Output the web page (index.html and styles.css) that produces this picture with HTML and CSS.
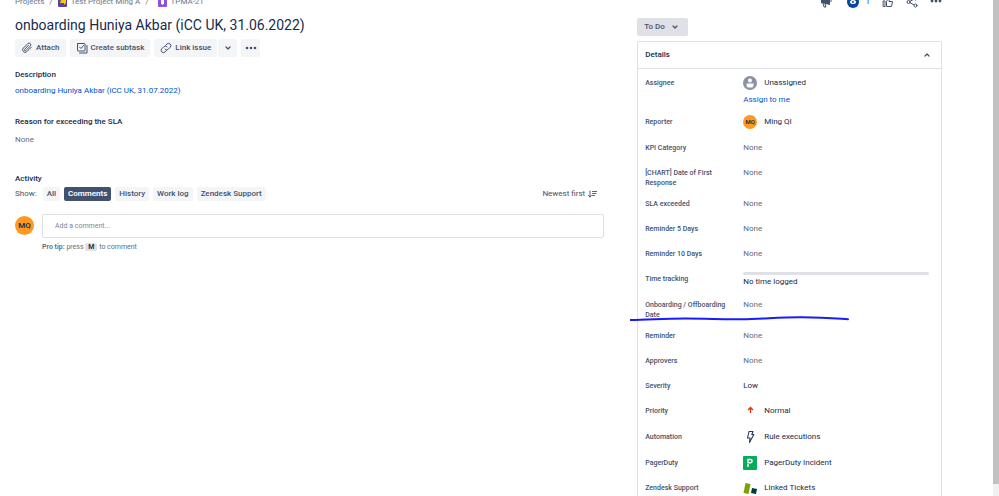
FILE: index.html
```html
<!DOCTYPE html>
<html lang="en">
<head>
  <meta charset="UTF-8" />
  <meta name="viewport" content="width=device-width, initial-scale=1.0"/>
  <title>TPMA-21 - onboarding Huniya Akbar</title>
  <link rel="stylesheet" href="styles.css">
</head>
<body>

  <div class="page">
    <main class="issue">
      <nav class="topbar breadcrumbs" aria-label="Breadcrumbs">
        <a href="#">Projects</a>
        <span class="slash">/</span>
        <a href="#" class="crumb">
          <svg width="9" height="9" viewBox="0 0 9 9"><rect width="9" height="9" rx="1" fill="#5243aa"/><path d="M3 2h5v3L6 7V5H2z" fill="#ffc400"/></svg>
          Test Project Ming A
        </a>
        <span class="slash">/</span>
        <a href="#" class="crumb crumb-key">
          <svg width="9" height="9" viewBox="0 0 9 9"><rect width="9" height="9" rx="1" fill="#904ee2"/><path d="M3 2h3v3.500L4.500 7 3 5.500z" fill="#fff"/></svg>
          TPMA-21
        </a>
      </nav>

      <h1>onboarding Huniya Akbar (iCC UK, 31.06.2022)</h1>

      <div class="actions">
        <button type="button" class="btn">
          <svg width="12" height="12" viewBox="0 0 24 24" class="stroke"><path d="M20.500 10.500l-8.700 8.700a5 5 0 0 1-7.100-7.100l8.900-8.900a3.500 3.500 0 0 1 5 5l-8.800 8.800a1.700 1.700 0 0 1-2.500-2.500l7.700-7.700"/></svg>
          Attach
        </button>
        <button type="button" class="btn">
          <svg width="12" height="12" viewBox="0 0 24 24" class="stroke"><rect x="3" y="3" width="15" height="15" rx="1"/><path d="M7 10l3 3 5-6M22 7v15H7"/></svg>
          Create subtask
        </button>
        <div class="split">
          <button type="button" class="btn">
            <svg width="12" height="12" viewBox="0 0 24 24" class="stroke"><path d="M10 14.500a4.500 4.500 0 0 0 6.500 0l4-4a4.600 4.600 0 0 0-6.500-6.500l-2.500 2.500M14 9.500a4.500 4.500 0 0 0-6.500 0l-4 4a4.600 4.600 0 0 0 6.500 6.500l2.500-2.500"/></svg>
            Link issue
          </button>
          <button type="button" class="btn btn-icon" aria-label="More link options">
            <svg width="6" height="6" viewBox="0 0 6 6" class="chevron"><path d="M1 2l2 2 2-2"/></svg>
          </button>
        </div>
        <button type="button" class="btn btn-icon" aria-label="More actions">
          <svg width="12" height="4" viewBox="0 0 12 4" fill="#42526e"><circle cx="2" cy="2" r="1.300"/><circle cx="6" cy="2" r="1.300"/><circle cx="10" cy="2" r="1.300"/></svg>
        </button>
      </div>

      <section class="field">
        <h2>Description</h2>
        <a href="#">onboarding Huniya Akbar (iCC UK, 31.07.2022)</a>
      </section>

      <section class="field field-reason">
        <h2>Reason for exceeding the SLA</h2>
        <span class="none">None</span>
      </section>

      <section class="activity">
        <h2>Activity</h2>
        <div class="filters">
          <span>Show:</span>
          <button type="button" class="tab">All</button>
          <button type="button" class="tab tab-active">Comments</button>
          <button type="button" class="tab">History</button>
          <button type="button" class="tab">Work log</button>
          <button type="button" class="tab">Zendesk Support</button>
          <button type="button" class="sort">
            Newest first
            <svg width="9" height="8" viewBox="0 0 9 8" class="thin"><path d="M2 1v6M0.500 5.500L2 7l1.500-1.500M4.500 1.500H9M4.500 3.500H8M4.500 5.500H6.500"/></svg>
          </button>
        </div>
        <div class="comment">
          <span class="avatar">MQ</span>
          <div class="comment-box">
            <input type="text" placeholder="Add a comment..." aria-label="Add a comment">
            <p class="tip"><b>Pro tip:</b> press <kbd>M</kbd> to comment</p>
          </div>
        </div>
      </section>
    </main>

    <aside class="sidebar">
      <div class="topbar tools">
        <button type="button" class="tool" aria-label="Give feedback">
          <svg width="12" height="12" viewBox="0 0 12 12"><path d="M1 4l9-3v8L1 7z" fill="#42526e"/><path d="M3 7l1 4h2L5 8M11 4v2" stroke="#42526e" fill="none"/></svg>
        </button>
        <button type="button" class="tool watch" aria-label="Watch options">
          <svg width="12" height="12" viewBox="0 0 12 12"><circle cx="6" cy="6" r="6" fill="#0747a6"/><ellipse cx="6" cy="6" rx="3" ry="2" fill="#fff"/><circle cx="6" cy="6" r="1" fill="#0747a6"/></svg>
          1
        </button>
        <button type="button" class="tool" aria-label="Vote">
          <svg width="12" height="12" viewBox="0 0 24 24" class="stroke"><path d="M3 10h3v11H3zM10 21h9l2-10h-7l1-7h-2l-4 7v9z"/></svg>
        </button>
        <button type="button" class="tool" aria-label="Share">
          <svg width="12" height="12" viewBox="0 0 24 24" class="stroke"><circle cx="5" cy="12" r="3"/><circle cx="19" cy="5" r="3"/><circle cx="19" cy="19" r="3"/><path d="M8 10.500l8-4M8 13.500l8 4"/></svg>
        </button>
        <button type="button" class="tool" aria-label="Actions">
          <svg width="12" height="12" viewBox="0 0 12 12" fill="#42526e"><circle cx="2" cy="5" r="1.400"/><circle cx="6" cy="5" r="1.400"/><circle cx="10" cy="5" r="1.400"/></svg>
        </button>
      </div>

      <button type="button" class="status">
        To Do
        <svg width="6" height="6" viewBox="0 0 6 6" class="chevron"><path d="M1 2l2 2 2-2"/></svg>
      </button>

      <section class="details">
        <button type="button" class="details-header" aria-expanded="true">
          Details
          <svg width="6" height="6" viewBox="0 0 6 6" class="chevron"><path d="M1 4l2-2 2 2"/></svg>
        </button>
        <dl>
          <div class="row">
            <dt>Assignee</dt>
            <dd>
              <div class="person">
                <svg width="14" height="14" viewBox="0 0 14 14"><circle cx="7" cy="7" r="7" fill="#8993a4"/><circle cx="7" cy="4.500" r="2" fill="#fff"/><path d="M3.500 7.500h7v2a2 2 0 0 1-2 2h-3a2 2 0 0 1-2-2z" fill="#fff"/></svg>
                Unassigned
              </div>
              <a href="#" class="assign">Assign to me</a>
            </dd>
          </div>
          <div class="row row-icon">
            <dt>Reporter</dt>
            <dd class="person"><span class="avatar avatar-small">MQ</span>Ming QI</dd>
          </div>
          <div class="row"><dt>KPI Category</dt><dd class="none">None</dd></div>
          <div class="row"><dt>[CHART] Date of First Response</dt><dd class="none">None</dd></div>
          <div class="row"><dt>SLA exceeded</dt><dd class="none">None</dd></div>
          <div class="row"><dt>Reminder 5 Days</dt><dd class="none">None</dd></div>
          <div class="row"><dt>Reminder 10 Days</dt><dd class="none">None</dd></div>
          <div class="row">
            <dt>Time tracking</dt>
            <dd><div class="time-bar"></div>No time logged</dd>
          </div>
          <div class="row row-marked">
            <dt>Onboarding / Offboarding Date</dt>
            <dd class="none">None</dd>
            <svg class="marker" width="219" height="6" viewBox="0 0 219 6"><path d="M0 4C20 4 30 2.500 55 2.500S90 3.500 112 3.200S150 1 172 1.200S200 2 218 3.200"/></svg>
          </div>
          <div class="row"><dt>Reminder</dt><dd class="none">None</dd></div>
          <div class="row"><dt>Approvers</dt><dd class="none">None</dd></div>
          <div class="row"><dt>Severity</dt><dd>Low</dd></div>
          <div class="row row-icon">
            <dt>Priority</dt>
            <dd class="person">
              <svg width="14" height="14" viewBox="0 0 14 14"><path d="M7.500 9V4M5 6l2.500-2.500L10 6" fill="none" stroke="#de350b" stroke-width="1.300"/></svg>
              Normal
            </dd>
          </div>
          <div class="row row-icon">
            <dt>Automation</dt>
            <dd class="person">
              <svg width="14" height="14" viewBox="0 0 14 14"><path d="M6 1.500h4L8.800 4.500h2L6.500 12.500 7 8H4.500z" fill="none" stroke="#253858" stroke-width="1.100" stroke-linejoin="round"/></svg>
              Rule executions
            </dd>
          </div>
          <div class="row">
            <dt>PagerDuty</dt>
            <dd class="person">
              <svg width="14" height="14" viewBox="0 0 14 14"><rect width="14" height="14" rx="1" fill="#06ac58"/><path d="M5 11V8M5 3.500h2.500a1.500 1.500 0 0 1 0 3.200H5z" fill="none" stroke="#fff" stroke-width="1.400"/></svg>
              PagerDuty Incident
            </dd>
          </div>
          <div class="row">
            <dt>Zendesk Support</dt>
            <dd class="person">
              <svg width="14" height="14" viewBox="0 0 14 14"><path d="M2.500 2l5 1L5.500 13l-5-1z" fill="#78a300"/><path d="M9 7l5 1-1 5L8 12z" fill="#03363d"/></svg>
              Linked Tickets
            </dd>
          </div>
        </dl>
      </section>
    </aside>
  </div>
  <div class="scroll-track"><div class="scroll-thumb"></div></div>

</body>
</html>
```

FILE: styles.css
```css
* {
  box-sizing: border-box;
}

body {
  display: flex;
  height: 100vh;
  margin: 0;
  overflow: hidden;
  background: #fff;
  color: #172b4d;
  font-family: Roboto, "Open Sans", sans-serif;
  font-size: 8px;
  line-height: 14px;
}

h1, h2, p, dl, dd {
  margin: 0;
}

h1 {
  margin-top: 6px;
  font-size: 14px;
  font-weight: 400;
  line-height: 20px;
}

h2 {
  font-size: 8px;
  font-weight: 500;
  line-height: 14px;
}

a {
  color: #0052cc;
  text-decoration: none;
}

button {
  padding: 0;
  border: none;
  background: none;
  color: #42526e;
  font: inherit;
  cursor: pointer;
}

svg {
  flex: none;
}

.stroke, .chevron, .thin, .marker {
  fill: none;
  stroke: #42526e;
  stroke-width: 2;
  stroke-linecap: round;
  stroke-linejoin: round;
}

.chevron {
  stroke-width: 1.2;
}

.thin {
  stroke-width: 0.9;
}

.page {
  display: grid;
  flex: 1;
  grid-template-columns: 29fr 15fr;
  gap: 33px;
  min-width: 0;
  padding: 0 51px 0 15px;
}

.issue, .sidebar {
  min-width: 0;
}

/* bar is scrolled halfway out of the view */
.topbar {
  display: flex;
  align-items: flex-end;
  height: 9px;
  overflow: hidden;
}

.breadcrumbs {
  gap: 5px;
}

.breadcrumbs a, .slash {
  color: #6b778c;
}

.crumb {
  display: flex;
  align-items: center;
  gap: 4px;
}

.crumb-key {
  margin-left: 4px;
}

.actions {
  display: flex;
  gap: 4px;
  margin-top: 4px;
}

.btn {
  display: flex;
  align-items: center;
  gap: 3px;
  height: 18px;
  padding: 0 6px;
  border-radius: 2px;
  background: #f4f5f7;
  font-weight: 500;
}

.btn-icon {
  justify-content: center;
  width: 19px;
  padding: 0;
}

.split {
  display: flex;
  gap: 1px;
}

.field {
  margin-top: 11px;
}

.field h2 {
  margin-bottom: 2px;
}

.field a, .field span {
  display: block;
}

.field-reason {
  margin-top: 17px;
}

.field-reason h2 {
  margin-bottom: 4px;
}

.none {
  color: #5e6c84;
}

.activity {
  margin-top: 25px;
}

.filters {
  display: flex;
  align-items: center;
  gap: 4px;
  margin-top: 1px;
  color: #42526e;
}

.tab {
  padding: 0 4px;
  border-radius: 2px;
  background: #f4f5f7;
  font-weight: 500;
}

.filters span {
  margin-right: 2px;
}

.tab-active {
  background: #42526e;
  color: #fff;
  font-weight: 600;
}

.sort {
  display: flex;
  align-items: center;
  gap: 3px;
  margin-left: auto;
  margin-right: 7px;
}

.comment {
  display: flex;
  gap: 8px;
  margin-top: 13px;
}

.avatar {
  flex: none;
  width: 19px;
  height: 19px;
  margin-top: 2px;
  border-radius: 50%;
  background: #ff991f;
  color: #172b4d;
  font-weight: 600;
  line-height: 19px;
  text-align: center;
}

.avatar-small {
  width: 14px;
  height: 14px;
  margin: 0;
  font-size: 6px;
  line-height: 14px;
}

.comment-box {
  flex: 1;
}

.comment-box input {
  display: block;
  width: 100%;
  height: 24px;
  padding: 0 12px;
  border: 1px solid #dfe1e6;
  border-radius: 2px;
  font: inherit;
  font-size: 7px;
}

.comment-box input::placeholder {
  color: #7a869a;
}

.tip {
  margin-top: 2px;
  color: #5e6c84;
  font-size: 7px;
}

.tip b {
  font-weight: 600;
}

kbd {
  padding: 0 3px;
  border-radius: 2px;
  background: #dfe1e6;
  color: #172b4d;
  font: inherit;
  font-weight: 600;
}

.tools {
  justify-content: flex-end;
  gap: 12px;
}

.tool {
  display: flex;
  align-items: center;
  height: 14px;
}

.watch {
  gap: 7px;
  margin-left: 3px;
  color: #0052cc;
}

.status {
  display: flex;
  align-items: center;
  gap: 7px;
  height: 18px;
  margin-top: 9px;
  padding: 0 10px 0 7px;
  border-radius: 2px;
  background: #dfe1e6;
  font-weight: 500;
}

.details {
  margin-top: 5px;
  border: 1px solid #dfe1e6;
  border-bottom: none;
  border-radius: 2px 2px 0 0;
}

.details-header {
  display: flex;
  align-items: center;
  justify-content: space-between;
  width: 100%;
  height: 27px;
  padding: 0 11px 0 7px;
  border-bottom: 1px solid #dfe1e6;
  color: #172b4d;
  font-weight: 500;
}

.details dl {
  padding: 1px 12px 0 7px;
}

.row {
  display: flex;
  gap: 12px;
  min-height: 25px;
  padding: 6px 0 3px;
}

.row-icon {
  min-height: 26px;
}

dt {
  flex: none;
  width: 86px;
  padding-top: 2px;
  color: #42526e;
  font-size: 7px;
  font-weight: 500;
  line-height: 10px;
}

dd {
  flex: 1;
}

.person {
  display: flex;
  align-items: center;
  gap: 7px;
  height: 14px;
}

.assign {
  display: block;
  margin-top: 4px;
  line-height: 12px;
}

.time-bar {
  height: 3px;
  border-radius: 2px;
  background: #dfe1e6;
}

.row-marked {
  position: relative;
}

/* pen stroke drawn over the card */
.marker {
  position: absolute;
  left: -15px;
  bottom: 1px;
  stroke: #1a1aff;
}

.scroll-track {
  width: 6px;
  background: #f1f1f1;
}

.scroll-thumb {
  height: 97.5%;
  background: #c1c1c1;
}
```
